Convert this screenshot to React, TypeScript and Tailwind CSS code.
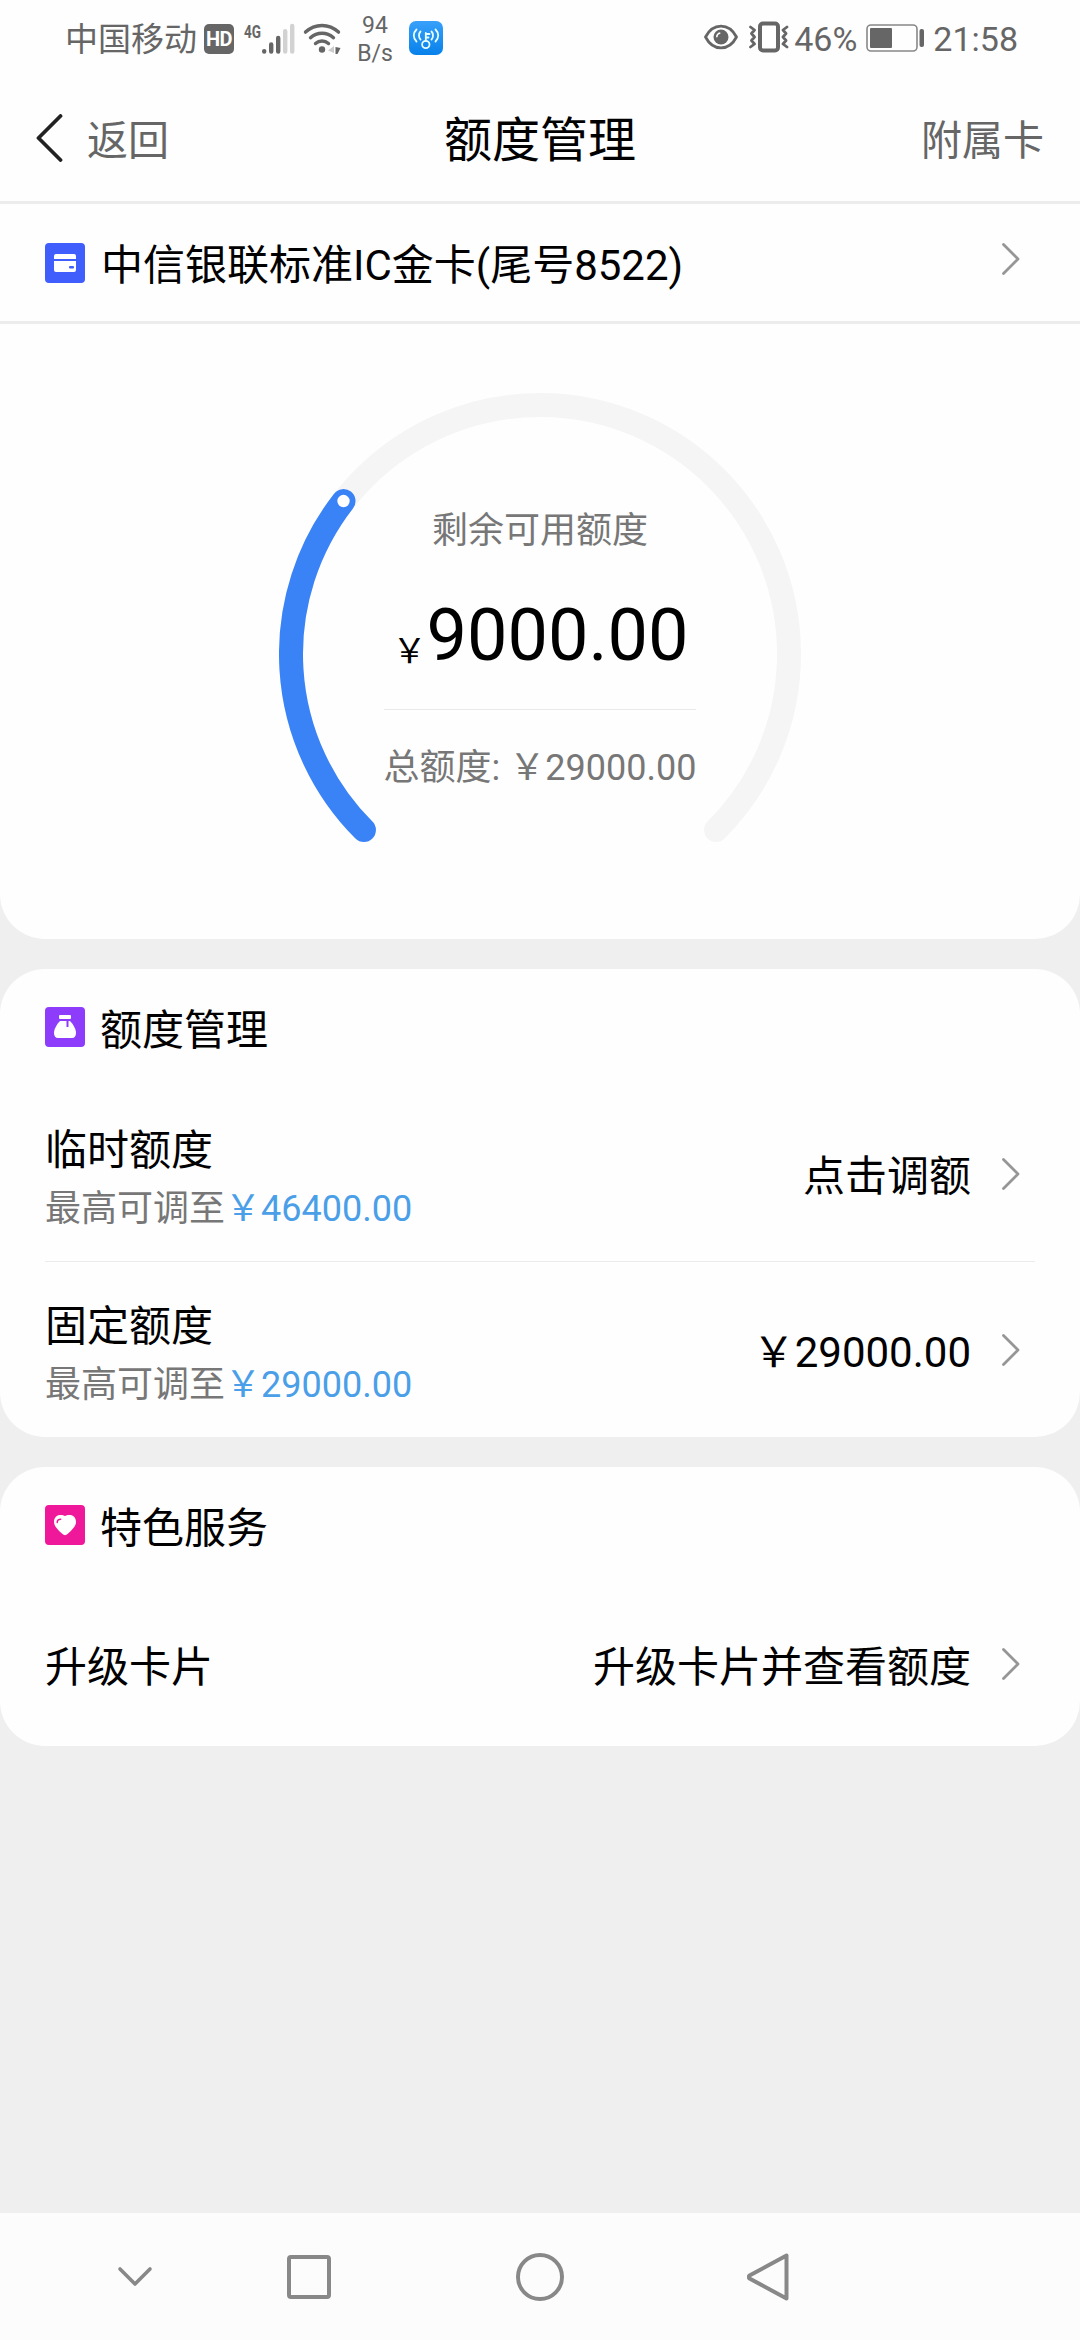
import type { ReactNode } from 'react';

const START_ANGLE = 135;
const CENTER = 261;
const RADIUS = 249;

function pointAt(angle: number) {
  const rad = (angle * Math.PI) / 180;
  return { x: CENTER + RADIUS * Math.cos(rad), y: CENTER + RADIUS * Math.sin(rad) };
}

function arc(sweep: number) {
  const from = pointAt(START_ANGLE);
  const to = pointAt(START_ANGLE + sweep);
  return `M${from.x} ${from.y}A${RADIUS} ${RADIUS} 0 ${sweep > 180 ? 1 : 0} 1 ${to.x} ${to.y}`;
}

function StatusBar() {
  return (
    <div className="flex h-[78px] items-center justify-between pl-[65px] pr-[62px] text-[#666666]">
      <div className="flex items-center">
        <span className="pt-[2px] text-[33px] leading-[40px]">中国移动</span>
        <span className="ml-[7px] flex h-[30px] w-[30px] items-center justify-center rounded-[5px] bg-[#666666] font-['Roboto'] text-[20px] font-bold leading-none tracking-[-0.5px] text-white">
          HD
        </span>
        <svg className="ml-[6px]" width="56" height="48" viewBox="-4 -8 56 48">
          <text x="0" y="14.5" textLength="17" lengthAdjust="spacingAndGlyphs" fill="#666" fontFamily="Roboto" fontSize="19" fontWeight="700">4G</text>
          <g strokeWidth="4.4" strokeLinecap="round" stroke="#666">
            <path d="M20.2 28.1v.4M27.2 21.500v7M34.2 15V28.500" />
            <path stroke="#d2d2d2" d="M41.2 8.3V28.500M48.2 3V28.500" />
          </g>
        </svg>
        <svg className="ml-[7px]" width="38" height="32" viewBox="0 0 38 32">
          <g fill="none" stroke="#666" strokeWidth="3.4" strokeLinecap="round">
            <path d="M2.5 9.1C12 .2 26 .2 35.500 9.100" />
            <path d="M7.500 14.700c6.600-6 16.400-6 23 0" />
            <path d="M12.500 20.500c3.800-3.400 9.200-3.400 13 0" />
          </g>
          <circle cx="19" cy="26.500" r="3.200" fill="#666" />
          <path d="M31 23v7l-6-2.500z" fill="#ccc" />
          <path d="M32.500 24l5 1-3 6h-2z" fill="#666" />
        </svg>
        <div className="ml-[15px] w-[38px] pt-[2px] text-center text-[23px] leading-[28px]">
          <div>94</div>
          <div>B/s</div>
        </div>
        <svg className="-mt-[3px] ml-[15px]" width="34" height="34" viewBox="0 0 34 34">
          <defs>
            <linearGradient id="key" x1="0" y1="0" x2="0" y2="1">
              <stop offset="0" stopColor="#38a0fa" />
              <stop offset="1" stopColor="#0781ea" />
            </linearGradient>
          </defs>
          <rect width="34" height="34" rx="7" fill="url(#key)" />
          <g fill="none" stroke="#e8ffff" strokeWidth="1.800" strokeLinecap="round">
            <circle cx="16.800" cy="23.500" r="3.700" />
            <path d="M16.800 19.800V12M17 13h3.500M17 16.500h2.500" />
            <path d="M11.500 10.500c-2 2-2 6 0 8M7.500 8.500c-3.600 3.500-3.600 8.500 0 12M22.500 10.500c2 2 2 6 0 8M26.500 8.500c3.600 3.500 3.600 8.500 0 12" />
          </g>
        </svg>
      </div>
      <div className="flex items-center">
        <svg className="-mt-[4px]" width="34" height="28" viewBox="0 0 34 28">
          <path d="M1.500 14C9 -.5 25 -.5 32.500 14 25 28.500 9 28.500 1.500 14z" fill="none" stroke="#666" strokeWidth="2.800" strokeLinejoin="round" />
          <circle cx="17" cy="14" r="7.500" fill="#666" />
          <path d="M12.800 14.200a4.300 4.300 0 0 1 3.500-4.200" fill="none" stroke="#fff" strokeWidth="1.600" />
        </svg>
        <svg className="-mt-[4px] ml-[10px]" width="42" height="32" viewBox="0 0 42 32">
          <g fill="none" stroke="#666" strokeLinejoin="round" strokeLinecap="round">
            <rect x="12" y="2.500" width="18" height="27" rx="3" strokeWidth="4" />
            <path strokeWidth="2.800" d="M2.500 6l4 3-3 3.500 3 3.500-3 3.500 3 3.500-4 3M39 6l-4 3 3 3.500-3 3.500 3 3.500-3 3.500 4 3" />
          </g>
        </svg>
        <span className="ml-[4px] text-[34px] leading-[40px]">46%</span>
        <svg className="-mt-[3px] ml-[9px]" width="58" height="28" viewBox="0 0 58 28">
          <rect x="1" y="1" width="50" height="26" rx="4" fill="none" stroke="#888" strokeWidth="1.600" />
          <rect x="4" y="4" width="22" height="20" rx="1" fill="#666" />
          <rect x="53.500" y="5" width="4.500" height="18" rx="2" fill="#666" />
        </svg>
        <span className="ml-[9px] text-[34px] leading-[40px]">21:58</span>
      </div>
    </div>
  );
}

function Chevron() {
  return (
    <svg className="shrink-0" width="18" height="32" viewBox="0 0 18 32">
      <path d="M1.500 1.500L16 16 1.500 30.500" fill="none" stroke="#969696" strokeWidth="2.800" strokeLinecap="round" strokeLinejoin="round" />
    </svg>
  );
}

function SectionTitle({ icon, children }: { icon: ReactNode; children: ReactNode }) {
  return (
    <div className="flex h-[116px] items-center px-[45px]">
      {icon}
      <h2 className="ml-[15px] pt-[8px] text-[42px] leading-[60px]">{children}</h2>
    </div>
  );
}

function LimitRow({ title, max, value }: { title: string; max: string; value: string }) {
  return (
    <div className="flex h-[175px] items-center justify-between pr-[15px]">
      <div className="pt-[11px]">
        <div className="text-[42px] leading-[60px]">{title}</div>
        <div className="text-[36px] leading-[57px] text-[#777777]">
          最高可调至<span className="text-[#4a9fe8]">{max}</span>
        </div>
      </div>
      <div className="flex items-center gap-[31px]">
        <span className="pt-[7px] text-[42px] leading-[60px]">{value}</span>
        <Chevron />
      </div>
    </div>
  );
}

function LimitGauge() {
  const handle = pointAt(START_ANGLE + 82.9);
  return (
    <div className="relative mx-auto h-[522px] w-[522px]">
      <svg className="absolute inset-0" width="522" height="522" viewBox="0 0 522 522">
        <g fill="none" strokeWidth="24" strokeLinecap="round">
          <path d={arc(270)} stroke="#f5f5f5" />
          <path d={arc(82.9)} stroke="#3a83f7" />
        </g>
        <circle cx={handle.x} cy={handle.y} r="6.200" fill="#fff" />
      </svg>
      <div className="relative flex flex-col items-center pt-[111px]">
        <div className="text-[36px] leading-[54px] text-[#777777]">剩余可用额度</div>
        <div className="mt-[28px] flex h-[112px] items-baseline pl-px leading-[100px]">
          <span className="translate-y-[3px] text-[34px]">￥</span>
          <span className="text-[72px]">9000.00</span>
        </div>
        <div className="mt-[11px] h-px w-[312px] bg-[#e9e9e9]" />
        <div className="mt-[31px] whitespace-pre text-[36px] leading-[54px] text-[#777777]">总额度: ￥29000.00</div>
      </div>
    </div>
  );
}

export default function App() {
  return (
    <main className="flex h-[2340px] w-[1080px] flex-col overflow-hidden bg-[#efefef] font-['Roboto','Noto_Sans_CJK_SC',sans-serif] text-black">
      <div className="h-[939px] rounded-b-[45px] bg-[#fefefe]">
        <StatusBar />

        {/* 导航栏 */}
        <header className="grid h-[126px] grid-cols-3 items-center border-b-[3px] border-[#ececec] pl-[36px] pr-[36px] text-[#666666]">
          <div className="flex items-center">
            <svg className="-mt-[4px]" width="27" height="48" viewBox="0 0 27 48">
              <path d="M24.500 2L2.500 24l22 22" fill="none" stroke="#222" strokeWidth="3.800" strokeLinecap="round" strokeLinejoin="round" />
            </svg>
            <span className="ml-[24px] pt-[2px] text-[41px] leading-[60px]">返回</span>
          </div>
          <h1 className="pt-[2px] text-center text-[48px] leading-[70px] text-black">额度管理</h1>
          <span className="pt-[2px] text-right text-[41px] leading-[60px]">附属卡</span>
        </header>

        <div className="flex h-[120px] items-center border-b-[3px] border-[#ececec] pl-[45px] pr-[60px]">
          <svg width="40" height="40" viewBox="0 0 40 40">
            <rect width="40" height="40" rx="4" fill="#3f5efb" />
            <path d="M9 13a2 2 0 0 1 2-2h18a2 2 0 0 1 2 2v3H9zM9 18h22v9a2 2 0 0 1-2 2H11a2 2 0 0 1-2-2z" fill="#fff" />
            <rect x="24" y="23" width="5" height="2.500" rx="1" fill="#3f5efb" />
          </svg>
          <span className="ml-[16px] flex-1 pt-[6px] text-[42px] leading-[60px]">中信银联标准IC金卡(尾号8522)</span>
          <div className="pb-[7px]">
            <Chevron />
          </div>
        </div>

        <div className="pt-[69px]">
          <LimitGauge />
        </div>
      </div>

      {/* 额度管理 */}
      <section className="mt-[30px] h-[468px] rounded-[45px] bg-[#fefefe]">
        <SectionTitle
          icon={
            <svg width="40" height="40" viewBox="0 0 40 40">
              <rect width="40" height="40" rx="4" fill="#8d3cfb" />
              <rect x="14" y="8" width="12" height="4" rx="1" fill="#fff" />
              <path d="M15 14h10c3 3 6 8 6 12 0 3-1.500 5-4 5H13c-2.500 0-4-2-4-5 0-4 3-9 6-12z" fill="#fff" />
              <path d="M22.500 13v7" stroke="#8d3cfb" strokeWidth="2" />
            </svg>
          }
        >
          额度管理
        </SectionTitle>
        <div className="px-[45px] pt-px">
          <LimitRow title="临时额度" max="￥46400.00" value="点击调额" />
          <div className="h-px bg-[#ebebeb]" />
          <LimitRow title="固定额度" max="￥29000.00" value="￥29000.00" />
        </div>
      </section>

      {/* 特色服务 */}
      <section className="mt-[30px] h-[279px] rounded-[45px] bg-[#fefefe]">
        <SectionTitle
          icon={
            <svg width="40" height="40" viewBox="0 0 40 40">
              <rect width="40" height="40" rx="4" fill="#f0189a" />
              <path d="M20 11c-3-2-11-2-11 6 0 4 3 7 8.500 12 1.500 1.500 3.500 1.500 5 0C28 24 31 21 31 17c0-8-8-8-11-6z" fill="#fff" />
              <path d="M12.200 17.500c0-2 1.300-3.200 3.500-3.200" fill="none" stroke="#f0189a" strokeWidth="1.500" strokeLinecap="round" />
            </svg>
          }
        >
          特色服务
        </SectionTitle>
        <div className="flex h-[162px] items-center justify-between pl-[45px] pr-[60px] text-[42px] leading-[60px]">
          <span className="pt-[7px]">升级卡片</span>
          <div className="flex items-center gap-[31px]">
            <span className="pt-[7px]">升级卡片并查看额度</span>
            <Chevron />
          </div>
        </div>
      </section>

      {/* 系统导航键 */}
      <nav className="mt-auto flex h-[127px] items-center bg-[#fcfcfc] pl-[117px]">
        <svg width="36" height="50" viewBox="0 0 36 50">
          <path d="M3 17l15 15 15-15" fill="none" stroke="#888" strokeWidth="3.600" strokeLinecap="round" strokeLinejoin="round" />
        </svg>
        <svg className="ml-[134px]" width="44" height="44" viewBox="0 0 44 44">
          <rect x="2" y="2" width="40" height="40" rx="2" fill="none" stroke="#888" strokeWidth="4" />
        </svg>
        <svg className="ml-[185px]" width="48" height="48" viewBox="0 0 48 48">
          <circle cx="24" cy="24" r="22" fill="none" stroke="#888" strokeWidth="4" />
        </svg>
        <svg className="ml-[183px]" width="42" height="48" viewBox="0 0 42 48">
          <path d="M39.500 2.500v43L2.500 25.500a2 2 0 0 1 0-3z" fill="none" stroke="#888" strokeWidth="4" strokeLinejoin="round" />
        </svg>
      </nav>
    </main>
  );
}
